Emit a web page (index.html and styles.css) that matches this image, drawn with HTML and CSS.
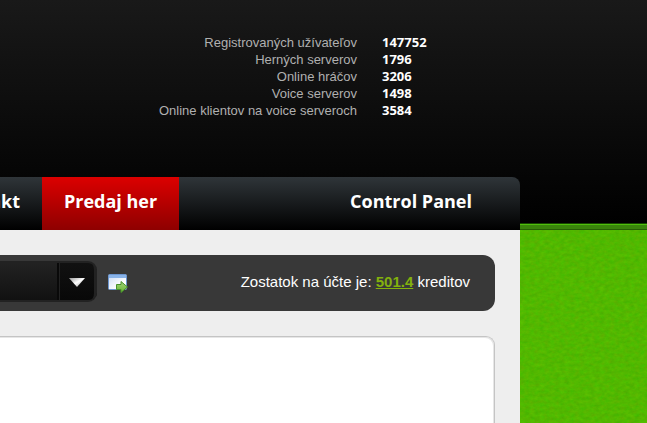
FILE: index.html
```
<!DOCTYPE html>
<html lang="sk">
<head>
<meta charset="utf-8">
<title>Control Panel</title>
<link rel="stylesheet" href="styles.css">
</head>
<body>
<header class="header">
  <table class="stats">
    <tr><th scope="row">Registrovaných užívateľov</th><td>147752</td></tr>
    <tr><th scope="row">Herných serverov</th><td>1796</td></tr>
    <tr><th scope="row">Online hráčov</th><td>3206</td></tr>
    <tr><th scope="row">Voice serverov</th><td>1498</td></tr>
    <tr><th scope="row">Online klientov na voice serveroch</th><td>3584</td></tr>
  </table>
</header>
<div class="columns">
  <div class="page">
    <nav class="nav">
      <a class="nav-link nav-edge" href="#">Kontakt</a>
      <a class="nav-link nav-active" href="#">Predaj her</a>
      <a class="nav-link nav-panel" href="#">Control Panel</a>
    </nav>
    <main class="content">
      <div class="account">
        <div class="picker">
          <select class="picker-select" aria-label="Server"><option></option></select>
          <span class="picker-arrow"><svg width="16" height="9" viewBox="0 0 16 9" aria-hidden="true"><defs><linearGradient id="arrow" x1="0" y1="0" x2="1" y2="1"><stop offset="0" stop-color="#999"/><stop offset=".5" stop-color="#fff"/><stop offset="1" stop-color="#888"/></linearGradient></defs><path d="M0 0h16L8 9z" fill="url(#arrow)"/></svg></span>
        </div>
        <button class="go" type="button" aria-label="Prejsť">
          <svg width="20" height="20" viewBox="0 0 20 20" aria-hidden="true">
            <defs>
              <linearGradient id="pane" x1="0" y1="0" x2="1" y2="1"><stop offset="0" stop-color="#c9d9f2"/><stop offset=".7" stop-color="#fff"/></linearGradient>
              <linearGradient id="go" x1="0" y1="0" x2="0" y2="1"><stop offset="0" stop-color="#a2d47a"/><stop offset="1" stop-color="#67b532"/></linearGradient>
            </defs>
            <rect x=".5" y="1.500" width="18" height="15" rx="1" fill="url(#pane)" stroke="#6c96cf"/>
            <path d="M1 2h17v3H1z" fill="#89b3e8"/>
            <path d="M8.500 11.500h4.500v-3l6.500 5.500-6.500 5.500v-3H8.500z" fill="url(#go)" stroke="#47902a"/>
          </svg>
        </button>
        <p class="balance">Zostatok na účte je: <a href="#">501.4</a> kreditov</p>
      </div>
      <section class="panel"></section>
    </main>
  </div>
  <div class="backdrop">
    <svg class="texture" width="100%" height="100%" aria-hidden="true">
      <filter id="cloth" x="0" y="0" width="100%" height="100%" color-interpolation-filters="sRGB">
        <feTurbulence type="fractalNoise" baseFrequency=".2 .3" numOctaves="4" seed="9"/>
        <feColorMatrix values=".13 0 0 0 .255  0 .1 0 0 .67  0 0 0 0 0  0 0 0 0 1"/>
      </filter>
      <rect width="100%" height="100%" filter="url(#cloth)"/>
    </svg>
  </div>
</div>
</body>
</html>
```
FILE: styles.css
```
* { box-sizing: border-box; }
body {
  margin: 0;
  min-height: 100vh;
  display: flex;
  flex-direction: column;
  background: linear-gradient(#191919, #000 223px) #000;
  font-family: "Liberation Sans", Arial, sans-serif;
}
.header { height: 177px; padding: 34px 0 0 157px; }
.stats { border-collapse: collapse; font-size: 13px; line-height: 17px; }
.stats th { width: 200px; padding: 0; font-weight: normal; text-align: right; color: #b0b0b0; }
.stats td { padding: 0 0 0 25px; font-family: "Open Sans", sans-serif; font-weight: bold; color: #fff; }
.columns { flex: 1; display: flex; }
.page { flex: 1; min-width: 0; display: flex; flex-direction: column; }
.nav {
  display: flex;
  height: 53px;
  overflow: hidden;
  border-radius: 0 8px 0 0;
  background: linear-gradient(#2f3539, #000);
}
.nav-link {
  display: flex;
  padding: 0 22px;
  font: bold 18px/48px "Open Sans", sans-serif;
  color: #fff;
  text-decoration: none;
  white-space: nowrap;
}
.nav-edge { flex: 0 0 42px; min-width: 0; padding-left: 0; justify-content: flex-end; }
.nav-active { background: linear-gradient(#dc0000, #8e0000); }
.nav-panel { margin: 0 26px 0 auto; }
.content {
  flex: 1;
  display: flex;
  flex-direction: column;
  gap: 25px;
  padding: 25px 25px 0 0;
  background: #eee;
}
.account {
  display: flex;
  align-items: center;
  height: 56px;
  padding-right: 25px;
  border-radius: 0 12px 12px 0;
  background: #383838;
}
.picker {
  display: grid;
  grid-template-columns: 60px 37px;
  height: 41px;
  margin-bottom: 3px;
  overflow: hidden;
  border: 2px solid #222;
  border-width: 2px 0;
  border-radius: 0 9px 9px 0;
  background: #111;
}
.picker-select {
  grid-area: 1 / 1 / 2 / 3;
  appearance: none;
  width: 100%;
  border: 0;
  background: linear-gradient(#222, #111);
  color: #fff;
}
.picker-arrow {
  grid-area: 1 / 2;
  display: grid;
  place-items: center;
  padding-top: 2px;
  border-right: 3px solid #222;
  border-radius: 0 7px 7px 0;
  background: linear-gradient(#111, #080808);
  box-shadow: -1px 0 #222, -3px 0 #090909;
  pointer-events: none;
}
.go { display: flex; margin-left: 11px; padding: 0; border: 0; background: none; }
.balance { margin: 0 0 3px auto; font-size: 15px; line-height: 20px; color: #fff; white-space: nowrap; }
.balance a { font-weight: bold; color: #83b10d; }
.panel {
  flex: 1;
  min-height: 87px;
  border: 1px solid #c4c4c4;
  border-width: 1px 1px 0 0;
  border-radius: 0 9px 0 0;
  background: #fff;
  box-shadow: inset -1px 1px #e6e6e6;
}
.backdrop {
  flex: 0 0 127px;
  display: flex;
  margin-top: 46px;
  border-top: 1px solid #174700;
  background: #4db900;
}
.texture { display: block; min-height: 199px; }
.backdrop::before {
  content: "";
  position: absolute;
  width: 127px;
  height: 6px;
  background: linear-gradient(#4fc00c 1px, #3a850c 1px 5px, #285f05 5px);
}
```
